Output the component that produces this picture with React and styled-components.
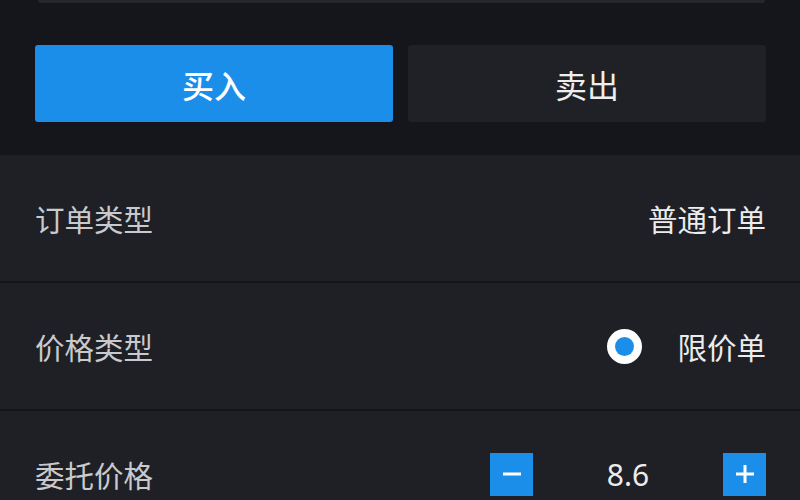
import React, { useState } from 'react'
import styled, { createGlobalStyle } from 'styled-components'

const GlobalStyle = createGlobalStyle`
  html, body {
    margin: 0;
    padding: 0;
    background: #1f2025;
    font-family: "Noto Sans", "Noto Sans CJK SC", sans-serif;
    overflow: hidden;
  }
`

const Page = styled.div`
  width: 800px;
  height: 500px;
  overflow: hidden;
  background: #1f2025;
`

const TopPanel = styled.div`
  background: #14161b;
  padding: 0 34px 33px 35px;
`

const InputEdge = styled.div`
  height: 3px;
  margin: 0 1px 0 3px;
  background: #25272d;
  border-radius: 0 0 4px 4px;
`

const SideButtons = styled.div`
  display: flex;
  gap: 15px;
  margin-top: 42px;
`

const SideButton = styled.button`
  flex: 1;
  height: 77px;
  padding: 0;
  border: none;
  border-radius: 3px;
  background: ${props => (props.active ? '#1a8ee9' : '#202126')};
  color: ${props => (props.active ? '#ffffff' : '#eeeeee')};
  font-family: "Noto Sans CJK SC", sans-serif;
  font-size: 32px;
  font-weight: ${props => (props.active ? 500 : 400)};
  cursor: pointer;
`

const Row = styled.div`
  display: flex;
  align-items: center;
  justify-content: space-between;
  height: 126px;
  padding: 0 34px 0 35px;
  border-bottom: 2px solid #141519;
`

const Label = styled.span`
  font-family: "Noto Sans CJK SC", sans-serif;
  font-size: 29.5px;
  color: #c9cacd;
`

const Value = styled.span`
  font-family: "Noto Sans CJK SC", sans-serif;
  font-size: 29.5px;
  color: #ececec;
`

const RadioGroup = styled.div`
  display: flex;
  align-items: center;
  gap: 35px;
`

const Radio = styled.span`
  width: 35px;
  height: 35px;
  box-sizing: border-box;
  border-radius: 50%;
  background: #ffffff;
  display: flex;
  align-items: center;
  justify-content: center;

  &::after {
    content: '';
    width: 19px;
    height: 19px;
    border-radius: 50%;
    background: #1a8ee9;
  }
`

const Stepper = styled.div`
  display: flex;
  align-items: center;
  justify-content: space-between;
  width: 276px;
`

const StepButton = styled.button`
  width: 43px;
  height: 43px;
  padding: 0;
  border: none;
  background: #1a8ee9;
  display: flex;
  align-items: center;
  justify-content: center;
  cursor: pointer;
`

const StepValue = styled.span`
  font-family: "Noto Sans", sans-serif;
  font-size: 30px;
  color: #ececec;
`

const Minus = () => (
  <svg width="18" height="18" viewBox="0 0 18 18">
    <rect x="0" y="7.5" width="18" height="3" fill="#ffffff" />
  </svg>
)

const Plus = () => (
  <svg width="18" height="18" viewBox="0 0 18 18">
    <rect x="0" y="7.5" width="18" height="3" fill="#ffffff" />
    <rect x="7.5" y="0" width="3" height="18" fill="#ffffff" />
  </svg>
)

const App = () => {
  const [price, setPrice] = useState(8.6)

  return (
    <Page>
      <GlobalStyle />
      <TopPanel>
        <InputEdge />
        <SideButtons>
          <SideButton active>买入</SideButton>
          <SideButton>卖出</SideButton>
        </SideButtons>
      </TopPanel>
      <Row>
        <Label>订单类型</Label>
        <Value>普通订单</Value>
      </Row>
      <Row>
        <Label>价格类型</Label>
        <RadioGroup>
          <Radio />
          <Value>限价单</Value>
        </RadioGroup>
      </Row>
      <Row>
        <Label>委托价格</Label>
        <Stepper>
          <StepButton onClick={() => setPrice(Math.round((price - 0.1) * 10) / 10)}>
            <Minus />
          </StepButton>
          <StepValue>{price.toFixed(1)}</StepValue>
          <StepButton onClick={() => setPrice(Math.round((price + 0.1) * 10) / 10)}>
            <Plus />
          </StepButton>
        </Stepper>
      </Row>
    </Page>
  )
}

export default App
